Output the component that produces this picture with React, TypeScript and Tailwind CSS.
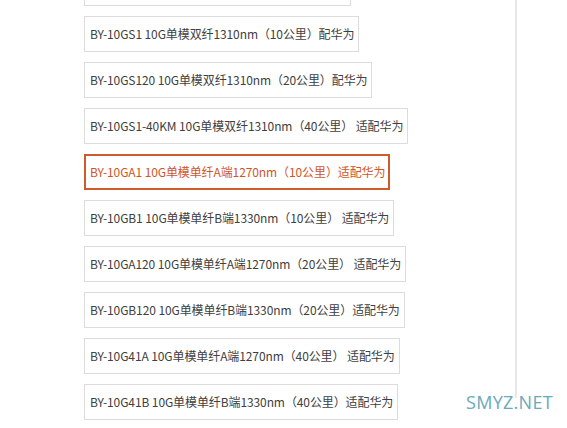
import React from 'react'

const items = [
  { label: 'BY-10GS1 10G单模双纤1310nm（10公里）配华为', active: false },
  { label: 'BY-10GS120 10G单模双纤1310nm（20公里）配华为', active: false },
  { label: 'BY-10GS1-40KM 10G单模双纤1310nm（40公里） 适配华为', active: false },
  { label: 'BY-10GA1 10G单模单纤A端1270nm（10公里）适配华为', active: true },
  { label: 'BY-10GB1 10G单模单纤B端1330nm（10公里） 适配华为', active: false },
  { label: 'BY-10GA120 10G单模单纤A端1270nm（20公里） 适配华为', active: false },
  { label: 'BY-10GB120 10G单模单纤B端1330nm（20公里）适配华为', active: false },
  { label: 'BY-10G41A 10G单模单纤A端1270nm（40公里） 适配华为', active: false },
  { label: 'BY-10G41B 10G单模单纤B端1330nm（40公里）适配华为', active: false },
]

const App = () => {
  return (
    <div className="relative h-[428px] w-[567px] overflow-hidden bg-white">
      <div className="h-full w-[517px] border-r-2 border-[#e8e8e8] pl-[84px]">
        <ul
          className="-mt-[30px] flex flex-col items-start gap-[10px]"
          style={{ fontFamily: '"Microsoft YaHei", "Noto Sans CJK SC", sans-serif' }}
        >
          {/* previous item, scrolled above the fold */}
          <li className="h-[36px] w-[267px] border border-[#dcdcdc]" />
          {items.map((item) => (
            <li
              key={item.label}
              className={
                item.active
                  ? "flex h-[36px] items-center whitespace-pre border-2 border-[#cf5a2a] pl-[4px] pr-[3px] text-[12px] tracking-[-0.1px] text-[#d0561f]"
                  : "flex h-[36px] items-center whitespace-pre border border-[#dcdcdc] pl-[5px] pr-[4px] text-[12px] tracking-[-0.1px] text-[#404040]"
              }
            >
              {item.label}
            </li>
          ))}
        </ul>
      </div>
      <div
        className="absolute bottom-[12px] right-[14px] text-[18px] tracking-[0.3px] text-[#6aa9ba]"
        style={{ fontFamily: '"Open Sans", "Noto Sans", sans-serif' }}
      >
        SMYZ.NET
      </div>
    </div>
  )
}

export default App
